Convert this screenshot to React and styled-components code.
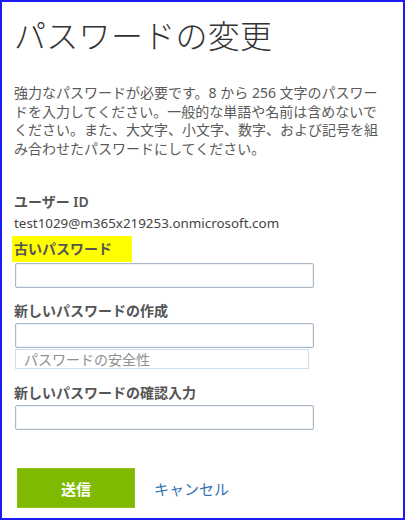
import React from "react";
import styled, { createGlobalStyle } from "styled-components";

const Global = createGlobalStyle`
  html, body { margin: 0; padding: 0; background: #ffffff; }
  body { font-family: "Noto Sans", "Noto Sans CJK JP", sans-serif; }
  * { box-sizing: border-box; }
`;

const Frame = styled.div`
  width: 405px;
  height: 520px;
  border: 2px solid #1b1bf5;
  background: #ffffff;
  padding: 0 0 0 12px;
  display: flex;
  flex-direction: column;
`;

const Title = styled.h1`
  margin: 10px 0 0 0;
  font-family: "Noto Sans CJK JP", sans-serif;
  font-weight: 300;
  font-size: 32px;
  line-height: 44px;
  color: #333333;
  letter-spacing: 0.3px;
`;

const Intro = styled.p`
  margin: 28px 0 0 0;
  width: 372px;
  font-family: "Noto Sans", "Noto Sans CJK JP", sans-serif;
  font-size: 14px;
  line-height: 18.5px;
  color: #5a5a5a;
`;

const Field = styled.div`
  display: flex;
  flex-direction: column;
  align-items: flex-start;
  margin-top: ${(p) => p.$top || 0}px;
`;

const Label = styled.div`
  font-family: "Noto Sans", "Noto Sans CJK JP", sans-serif;
  font-weight: 600;
  font-size: 14px;
  line-height: 20px;
  color: #555555;
  padding: ${(p) => (p.$hl ? "3px 20px 3px 2px" : "0")};
  margin-left: ${(p) => (p.$hl ? "-2px" : "0")};
  background: ${(p) => (p.$hl ? "#ffff00" : "transparent")};
`;

const Value = styled.div`
  font-family: "Noto Sans", sans-serif;
  font-size: 13.4px;
  line-height: 20px;
  color: #444444;
  margin-top: 1px;
`;

const Input = styled.input`
  display: block;
  width: 299px;
  height: 25px;
  margin: ${(p) => p.$top || 0}px 0 0 1px;
  border: 1px solid #a9b7c6;
  border-radius: 2px;
  box-shadow: inset 0 0 0 1px #eef2f6;
  background: #ffffff;
  outline: none;
  padding: 0 6px;
`;

const Strength = styled.div`
  width: 294px;
  height: 20px;
  margin: 1px 0 0 1px;
  border: 1px solid #c9e1f5;
  font-family: "Noto Sans CJK JP", sans-serif;
  font-size: 14px;
  line-height: 18px;
  color: #8f8f8f;
  padding-left: 8px;
`;

const Actions = styled.div`
  display: flex;
  align-items: center;
  gap: 19px;
  margin: 38px 0 0 3px;
`;

const Submit = styled.button`
  width: 118px;
  height: 40px;
  border: 1px solid #8cc21a;
  background: #7fba00;
  color: #ffffff;
  font-family: "Noto Sans CJK JP", sans-serif;
  font-weight: 700;
  font-size: 15px;
  cursor: pointer;
  padding: 0;
`;

const Cancel = styled.a`
  font-family: "Noto Sans CJK JP", sans-serif;
  font-size: 15px;
  color: #3573ad;
  text-decoration: none;
  cursor: pointer;
`;

export default function App() {
  return (
    <>
      <Global />
      <Frame>
        <Title>パスワードの変更</Title>
        <Intro>
          強力なパスワードが必要です。8 から 256 文字のパスワードを入力してください。一般的な単語や名前は含めないでください。また、大文字、小文字、数字、および記号を組み合わせたパスワードにしてください。
        </Intro>
        <Field $top={34}>
          <Label>ユーザー ID</Label>
          <Value>test1029@m365x219253.onmicrosoft.com</Value>
        </Field>
        <Field $top={3}>
          <Label $hl>古いパスワード</Label>
          <Input type="password" $top={1} />
        </Field>
        <Field $top={13}>
          <Label>新しいパスワードの作成</Label>
          <Input type="password" $top={2} />
          <Strength>パスワードの安全性</Strength>
        </Field>
        <Field $top={14}>
          <Label>新しいパスワードの確認入力</Label>
          <Input type="password" $top={2} />
        </Field>
        <Actions>
          <Submit type="button">送信</Submit>
          <Cancel>キャンセル</Cancel>
        </Actions>
      </Frame>
    </>
  );
}
